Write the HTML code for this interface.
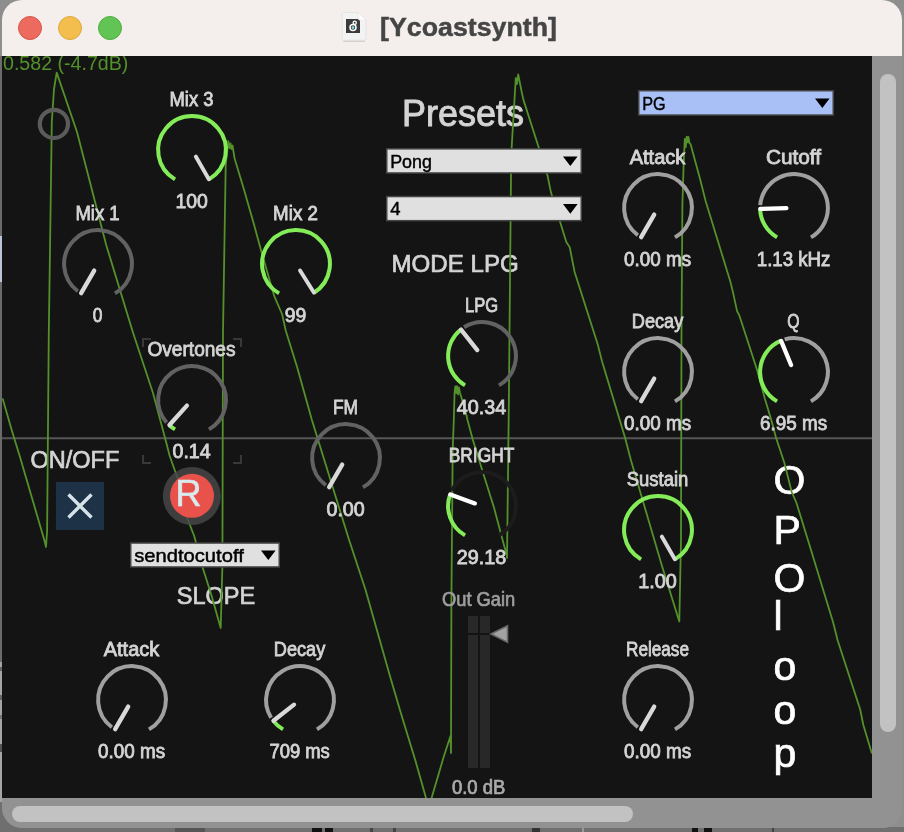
<!DOCTYPE html>
<html><head><meta charset="utf-8"><title>[Ycoastsynth]</title>
<style>
html,body{margin:0;padding:0;background:#8e8e8e;}
body{width:904px;height:832px;overflow:hidden;position:relative;font-family:"Liberation Sans",sans-serif;}
svg{will-change:transform;position:absolute;left:0;top:0;display:block}
text{font-family:"Liberation Sans",sans-serif;}
.kl{font-size:19.4px;text-anchor:middle;stroke:#d4d4d4;stroke-width:0.8px;}
.b{stroke:#d4d4d4;stroke-width:0.7px;}
.bb{stroke:#d4d4d4;stroke-width:0.9px;}
.mt{stroke:#000;stroke-width:0.45px;}
</style></head><body>
<svg width="904" height="832" viewBox="0 0 904 832">
<defs><clipPath id="win"><rect x="2" y="0" width="900" height="828" rx="20" ry="20"/></clipPath>
<clipPath id="content"><rect x="2" y="56" width="870" height="742"/></clipPath></defs>
<!-- desktop behind -->
<rect x="0" y="0" width="904" height="832" fill="#8e8e8e"/>
<rect x="0" y="56" width="4" height="180" fill="#6b6b6b"/>
<rect x="0" y="236" width="4" height="46" fill="#b9c5d8"/>
<rect x="0" y="282" width="4" height="380" fill="#6b6b6b"/>
<rect x="0" y="662" width="4" height="140" fill="#a4a4a4"/>
<rect x="0" y="667" width="4" height="4" fill="#666"/><rect x="0" y="695" width="4" height="5" fill="#666"/><rect x="0" y="715" width="4" height="4" fill="#777"/><rect x="0" y="744" width="4" height="8" fill="#555"/>
<rect x="0" y="802" width="20" height="30" fill="#6f6f6f"/><rect x="0" y="827" width="904" height="5" fill="#6f6f6f"/>
<rect x="175" y="826" width="30" height="6" fill="#555"/><rect x="312" y="826" width="10" height="6" fill="#111"/><rect x="325" y="826" width="8" height="6" fill="#111"/>
<rect x="370" y="826" width="3" height="6" fill="#444"/><rect x="393" y="826" width="3" height="6" fill="#444"/>
<rect x="532" y="826" width="8" height="6" fill="#333"/><rect x="582" y="826" width="2" height="6" fill="#999"/>
<rect x="692" y="826" width="6" height="6" fill="#111"/><rect x="704" y="826" width="8" height="6" fill="#111"/><rect x="772" y="826" width="2" height="6" fill="#444"/>
<rect x="886" y="0" width="18" height="60" fill="#8e8e8e"/>
<g clip-path="url(#win)">
<rect x="2" y="0" width="900" height="56" fill="#f4eeec"/>
<rect x="2" y="56" width="870" height="742" fill="#141414"/>
<rect x="872" y="56" width="30" height="772" fill="#929292"/>
<rect x="2" y="798" width="900" height="30" fill="#929292"/>
</g>
<!-- scrollbars -->
<rect x="880" y="74" width="16" height="658" rx="8" fill="#c2c2c2"/>
<rect x="12" y="806" width="621" height="16" rx="8" fill="#c2c2c2"/>
<!-- traffic lights -->
<circle cx="30" cy="28" r="11.5" fill="#ec6a5e" stroke="#d9544a" stroke-width="1"/>
<circle cx="70" cy="28" r="11.5" fill="#f4be4f" stroke="#dea73c" stroke-width="1"/>
<circle cx="110" cy="28" r="11.5" fill="#61c454" stroke="#4fae42" stroke-width="1"/>
<!-- title -->
<g>
<path d="M343.2 41.2h21.8" stroke="#cfc9c7" stroke-width="1.2"/>
<path d="M343.5 12.5h14.8l7.7 7.7v18.6a1.4 1.4 0 0 1-1.4 1.4h-21.1a1.4 1.4 0 0 1-1.4-1.4v-24.9a1.4 1.4 0 0 1 1.4-1.4z" fill="#f3f3f3" stroke="#dcdcdc" stroke-width="0.7"/>
<rect x="346" y="19" width="14" height="14" fill="#3b3b3b"/>
<path d="M358.3 12.5v6.3a1.4 1.4 0 0 0 1.4 1.4h6.3z" fill="#fdfdfd" stroke="#e2e2e2" stroke-width="0.5"/>
<circle cx="354.7" cy="22.8" r="1.6" fill="none" stroke="#fff" stroke-width="1.3"/>
<circle cx="353" cy="27.6" r="3.0" fill="#3b3b3b" stroke="#fff" stroke-width="1.5"/>
<circle cx="353" cy="27.6" r="1.35" fill="#86e4e6"/>
<text x="380" y="35.8" font-size="26.7" font-weight="bold" fill="#454545" stroke="#454545" stroke-width="0.5" textLength="177" lengthAdjust="spacing">[Ycoastsynth]</text>
</g>
<g clip-path="url(#content)">
<!-- scope: zero line, trace, readout -->
<line x1="2" y1="438.3" x2="872" y2="438.3" stroke="#565656" stroke-width="2"/>
<!-- big labels -->
<text x="402" y="126" font-size="36" fill="#d4d4d4" text-anchor="start" class="bb">Presets</text>
<text x="391.5" y="271.7" font-size="24.4" fill="#d4d4d4" text-anchor="start" textLength="127.2" lengthAdjust="spacingAndGlyphs" class="b">MODE LPG</text>
<text x="30.5" y="467.8" font-size="24.4" fill="#d4d4d4" text-anchor="start" textLength="88.8" lengthAdjust="spacingAndGlyphs" class="b">ON/OFF</text>
<text x="176.7" y="603.8" font-size="24.4" fill="#d4d4d4" text-anchor="start" textLength="78.6" lengthAdjust="spacingAndGlyphs" class="b">SLOPE</text>
<!-- OPOloop -->
<g font-size="41" fill="#fff" stroke="#fff" stroke-width="0.7">
<text x="773.4" y="493.7">O</text><text x="773.4" y="543.6">P</text><text x="773.4" y="591.6">O</text>
<text x="773.4" y="630">l</text><text x="773.4" y="680">o</text><text x="773.4" y="724">o</text><text x="773.4" y="767.3">p</text>
</g>
<path d="M2.6 398.4 L12 431 L20 457 L32 498 L44.3 540 L46 547 L47.1 531 L48.8 332 L50 250 L51.8 122 L54 89 L56.7 72.6 L77 132 L106.2 245 L132.8 332 L153 393 L164.5 436 L169.7 456 L177.9 479 L187 517.5 L194.2 536 L202.8 568 L211.6 595.7 L215.6 610 L220.7 628 L222.4 566 L223 332 L225.7 165.5 L228.3 141.2 L229.5 148 L230.5 143.5 L231.5 149 L232.5 145.5 L234.6 158.5 L243.3 187.3 L253.8 223.8 L261.7 252.8 L274.3 296.2 L282.2 314.5 L285.7 330.5 L297.1 367 L311.9 420 L349.1 540 L365.5 589.8 L389 672.8 L400 710.2 L415.6 761.3 L425.8 797.3 L428.7 807.7 L431.8 797.3 L443.8 756.5 L450.5 736 L451 753 L451.4 600 L452.7 450 L453.8 420 L454.6 392 L455.3 386.3 L456.2 393 L457 386.2 L458 394.5 L458.9 387.5 L460 393 L462 399.5 L465.8 412.3 L467.5 420 L472.9 440 L483.8 475.3 L493.9 507.3 L506.5 554.4 L507 558 L508.9 400 L509.5 332 L511.2 155.6 L514 108 L515.8 78 L517 84 L518.2 74.4 L521.8 92.5 L523.6 100.4 L539 148.2 L547.5 175.5 L551 192.6 L566.3 242 L569.7 247.2 L574.6 271.9 L597.6 343.9 L602 361.2 L625 437.6 L630.8 459.8 L662 566 L679.3 621.5 L681 540 L681.5 332 L682.4 205 L683.6 165 L684.8 138.8 L685.8 147 L686.7 136.6 L687.7 142.3 L688.4 137 L689.6 143.3 L690.6 144.2 L700 178.8 L705.6 201 L730.4 281.8 L733 292.4 L737 310.9 L739.6 316.2 L756.8 369 L764.8 398.4 L771.3 420 L776.1 438 L784.5 463.3 L791.7 492 L796.5 503 L811 550 L833.1 622.3 L837.6 640.3 L860.2 709.5 L863.2 724.5 L871.9 753.5" fill="none" stroke="#53912b" stroke-width="1.8" stroke-linejoin="round"/>
<text x="3" y="70.3" font-size="20" fill="#53912b" textLength="125.3" lengthAdjust="spacingAndGlyphs">0.582 (-4.7dB)</text>
<circle cx="53.9" cy="123.9" r="14.1" fill="none" stroke="#5b5b5b" stroke-width="4.2"/>
<!-- overtones brackets -->
<path d="M143 347v-8h8 M233 339h8v8 M143 455v8h8 M233 463h8v-8" fill="none" stroke="#383838" stroke-width="2"/>
<path d="M175.05 179.36A33.9 33.9 0 1 1 208.95 179.36" fill="none" stroke="#84ec58" stroke-width="4"/>
<line x1="195.80" y1="156.58" x2="208.85" y2="179.19" stroke="#d9d9d9" stroke-width="3.9" stroke-linecap="round"/>
<text x="191.5" y="106" class="kl" fill="#d4d4d4" textLength="44" lengthAdjust="spacingAndGlyphs">Mix 3</text>
<text x="191.6" y="208" class="kl" fill="#d4d4d4" textLength="32.4" lengthAdjust="spacingAndGlyphs">100</text>
<path d="M77.84 291.25A33.9 33.9 0 1 1 114.95 293.36" fill="none" stroke="#626262" stroke-width="4"/>
<line x1="94.20" y1="270.58" x2="81.15" y2="293.19" stroke="#d9d9d9" stroke-width="4.3" stroke-linecap="round"/>
<text x="97.5" y="220" class="kl" fill="#d4d4d4" textLength="44.2" lengthAdjust="spacingAndGlyphs">Mix 1</text>
<text x="97.6" y="322" class="kl" fill="#d4d4d4" textLength="9.7" lengthAdjust="spacingAndGlyphs">0</text>

<path d="M279.05 293.36A33.9 33.9 0 1 1 313.96 292.75" fill="none" stroke="#84ec58" stroke-width="4"/>
<line x1="300.03" y1="270.45" x2="313.86" y2="292.58" stroke="#d9d9d9" stroke-width="3.9" stroke-linecap="round"/>
<text x="295.5" y="220" class="kl" fill="#d4d4d4" textLength="44.8" lengthAdjust="spacingAndGlyphs">Mix 2</text>
<text x="295.6" y="322" class="kl" fill="#d4d4d4" textLength="21.6" lengthAdjust="spacingAndGlyphs">99</text>
<path d="M166.61 422.46A33.9 33.9 0 1 1 208.95 429.36" fill="none" stroke="#626262" stroke-width="4"/>
<path d="M175.05 429.36A33.9 33.9 0 0 1 169.32 425.19" fill="none" stroke="#84ec58" stroke-width="4"/>
<line x1="186.91" y1="405.65" x2="169.45" y2="425.04" stroke="#d9d9d9" stroke-width="4.3" stroke-linecap="round"/>
<text x="191.5" y="356" class="kl" fill="#d4d4d4" textLength="88" lengthAdjust="spacingAndGlyphs">Overtones</text>
<text x="191.6" y="458" class="kl" fill="#d4d4d4" textLength="38.2" lengthAdjust="spacingAndGlyphs">0.14</text>
<path d="M325.84 485.25A33.9 33.9 0 1 1 362.95 487.36" fill="none" stroke="#626262" stroke-width="4"/>
<line x1="342.20" y1="464.58" x2="329.15" y2="487.19" stroke="#d9d9d9" stroke-width="4.3" stroke-linecap="round"/>
<text x="345.5" y="414" class="kl" fill="#d4d4d4" textLength="25.1" lengthAdjust="spacingAndGlyphs">FM</text>
<text x="345.6" y="516" class="kl" fill="#d4d4d4" textLength="38.3" lengthAdjust="spacingAndGlyphs">0.00</text>
<path d="M464.04 327.25A33.9 33.9 0 1 1 498.95 385.36" fill="none" stroke="#626262" stroke-width="4"/>
<path d="M465.05 385.36A33.9 33.9 0 0 1 460.90 329.47" fill="none" stroke="#84ec58" stroke-width="4"/>
<line x1="477.27" y1="350.05" x2="461.02" y2="329.63" stroke="#d9d9d9" stroke-width="4.3" stroke-linecap="round"/>
<text x="481.5" y="312" class="kl" fill="#d4d4d4" textLength="33.1" lengthAdjust="spacingAndGlyphs">LPG</text>
<text x="481.6" y="414" class="kl" fill="#d4d4d4" textLength="49.5" lengthAdjust="spacingAndGlyphs">40.34</text>
<path d="M451.66 490.87A33.9 33.9 0 1 1 498.95 535.36" fill="none" stroke="#1c1c1c" stroke-width="4"/>
<path d="M465.05 535.36A33.9 33.9 0 0 1 450.14 494.41" fill="none" stroke="#84ec58" stroke-width="4"/>
<line x1="474.86" y1="503.40" x2="450.33" y2="494.47" stroke="#ffffff" stroke-width="4.3" stroke-linecap="round"/>
<text x="481.5" y="462" class="kl" fill="#d4d4d4" textLength="65.5" lengthAdjust="spacingAndGlyphs">BRIGHT</text>
<text x="481.6" y="564" class="kl" fill="#d4d4d4" textLength="49.5" lengthAdjust="spacingAndGlyphs">29.18</text>
<path d="M637.84 235.25A33.9 33.9 0 1 1 674.95 237.36" fill="none" stroke="#a0a0a0" stroke-width="4"/>
<line x1="654.20" y1="214.58" x2="641.15" y2="237.19" stroke="#d9d9d9" stroke-width="4.3" stroke-linecap="round"/>
<text x="657.5" y="164" class="kl" fill="#d4d4d4" textLength="55.7" lengthAdjust="spacingAndGlyphs">Attack</text>
<text x="657.6" y="266" class="kl" fill="#d4d4d4" textLength="67" lengthAdjust="spacingAndGlyphs">0.00 ms</text>
<path d="M760.23 205.05A33.9 33.9 0 1 1 810.95 237.36" fill="none" stroke="#a0a0a0" stroke-width="4"/>
<path d="M777.05 237.36A33.9 33.9 0 0 1 760.11 208.89" fill="none" stroke="#84ec58" stroke-width="4"/>
<line x1="786.40" y1="208.20" x2="760.31" y2="208.88" stroke="#ffffff" stroke-width="4.3" stroke-linecap="round"/>
<text x="793.5" y="164" class="kl" fill="#d4d4d4" textLength="55.1" lengthAdjust="spacingAndGlyphs">Cutoff</text>
<text x="793.6" y="266" class="kl" fill="#d4d4d4" textLength="73.7" lengthAdjust="spacingAndGlyphs">1.13 kHz</text>
<path d="M637.84 399.25A33.9 33.9 0 1 1 674.95 401.36" fill="none" stroke="#a0a0a0" stroke-width="4"/>
<line x1="654.20" y1="378.58" x2="641.15" y2="401.19" stroke="#d9d9d9" stroke-width="4.3" stroke-linecap="round"/>
<text x="657.5" y="328" class="kl" fill="#d4d4d4" textLength="51.4" lengthAdjust="spacingAndGlyphs">Decay</text>
<text x="657.6" y="430" class="kl" fill="#d4d4d4" textLength="67" lengthAdjust="spacingAndGlyphs">0.00 ms</text>
<path d="M784.66 339.41A33.9 33.9 0 0 1 810.95 401.36" fill="none" stroke="#a0a0a0" stroke-width="4"/>
<path d="M777.05 401.36A33.9 33.9 0 0 1 781.03 340.68" fill="none" stroke="#84ec58" stroke-width="4"/>
<line x1="791.09" y1="364.98" x2="781.10" y2="340.87" stroke="#ffffff" stroke-width="4.3" stroke-linecap="round"/>
<text x="793.5" y="328" class="kl" fill="#d4d4d4" textLength="12.3" lengthAdjust="spacingAndGlyphs">Q</text>
<text x="793.6" y="430" class="kl" fill="#d4d4d4" textLength="67" lengthAdjust="spacingAndGlyphs">6.95 ms</text>
<path d="M641.05 559.36A33.9 33.9 0 1 1 674.95 559.36" fill="none" stroke="#84ec58" stroke-width="4"/>
<line x1="661.80" y1="536.58" x2="674.85" y2="559.19" stroke="#d9d9d9" stroke-width="3.9" stroke-linecap="round"/>
<text x="657.5" y="486" class="kl" fill="#d4d4d4" textLength="61.5" lengthAdjust="spacingAndGlyphs">Sustain</text>
<text x="657.6" y="588" class="kl" fill="#d4d4d4" textLength="38.5" lengthAdjust="spacingAndGlyphs">1.00</text>
<path d="M637.84 727.25A33.9 33.9 0 1 1 674.95 729.36" fill="none" stroke="#a0a0a0" stroke-width="4"/>
<line x1="654.20" y1="706.58" x2="641.15" y2="729.19" stroke="#d9d9d9" stroke-width="4.3" stroke-linecap="round"/>
<text x="657.5" y="656" class="kl" fill="#d4d4d4" textLength="63" lengthAdjust="spacingAndGlyphs">Release</text>
<text x="657.6" y="758" class="kl" fill="#d4d4d4" textLength="67" lengthAdjust="spacingAndGlyphs">0.00 ms</text>
<path d="M111.84 727.25A33.9 33.9 0 1 1 148.95 729.36" fill="none" stroke="#a0a0a0" stroke-width="4"/>
<line x1="128.20" y1="706.58" x2="115.15" y2="729.19" stroke="#d9d9d9" stroke-width="4.3" stroke-linecap="round"/>
<text x="131.5" y="656" class="kl" fill="#d4d4d4" textLength="55.5" lengthAdjust="spacingAndGlyphs">Attack</text>
<text x="131.6" y="758" class="kl" fill="#d4d4d4" textLength="67" lengthAdjust="spacingAndGlyphs">0.00 ms</text>
<path d="M271.10 717.71A33.9 33.9 0 1 1 316.95 729.36" fill="none" stroke="#a0a0a0" stroke-width="4"/>
<path d="M283.05 729.36A33.9 33.9 0 0 1 273.29 720.87" fill="none" stroke="#84ec58" stroke-width="4"/>
<line x1="294.01" y1="704.68" x2="273.44" y2="720.75" stroke="#d9d9d9" stroke-width="4.3" stroke-linecap="round"/>
<text x="299.5" y="656" class="kl" fill="#d4d4d4" textLength="51.4" lengthAdjust="spacingAndGlyphs">Decay</text>
<text x="299.6" y="758" class="kl" fill="#d4d4d4" textLength="60.4" lengthAdjust="spacingAndGlyphs">709 ms</text>
<!-- toggle -->
<rect x="56" y="482" width="48" height="48" fill="#1d3147"/>
<path d="M68.5 494.5L91.5 517.5M91.5 494.5L68.5 517.5" stroke="#d6e4e8" stroke-width="3.4" fill="none"/>
<!-- R button -->
<circle cx="191.8" cy="496" r="29" fill="#484848" fill-opacity="0.82"/>
<circle cx="192" cy="495.8" r="22" fill="#e9524a"/>
<text x="188.5" y="506.2" font-size="36" fill="#d9eaee" stroke="#d9eaee" stroke-width="0.6" text-anchor="middle">R</text>
<!-- menus -->
<rect x="386" y="148.1" width="196" height="25.6" fill="#454545"/><rect x="387.5" y="149.6" width="193" height="22.6" fill="#e0e0e0"/><text x="390.2" y="167.5" font-size="18.5" fill="#000" class="mt" textLength="41.8" lengthAdjust="spacingAndGlyphs">Pong</text><path d="M563.0 156.4h14.6l-7.3 9.6z" fill="#000"/>
<rect x="386" y="195.8" width="196" height="25.6" fill="#454545"/><rect x="387.5" y="197.3" width="193" height="22.6" fill="#e0e0e0"/><text x="390.2" y="215.20000000000002" font-size="18.5" fill="#000" class="mt">4</text><path d="M563.0 204.10000000000002h14.6l-7.3 9.6z" fill="#000"/>
<rect x="638" y="90" width="196" height="25.8" fill="#454545"/><rect x="639.5" y="91.5" width="193" height="22.8" fill="#a8c0f5"/><text x="642.2" y="109.6" font-size="18.5" fill="#000" class="mt" textLength="23.5" lengthAdjust="spacingAndGlyphs">PG</text><path d="M815.0 98.4h14.6l-7.3 9.6z" fill="#000"/>
<rect x="130" y="542.3" width="150" height="25.4" fill="#454545"/><rect x="131.5" y="543.8" width="147" height="22.4" fill="#e0e0e0"/><text x="134.2" y="561.4999999999999" font-size="18.5" fill="#000" class="mt" textLength="109.6" lengthAdjust="spacingAndGlyphs">sendtocutoff</text><path d="M261.0 550.5h14.6l-7.3 9.6z" fill="#000"/>
<!-- out gain -->
<text x="478.6" y="606" font-size="19.4" fill="#9d9d9d" stroke="#9d9d9d" stroke-width="0.7" text-anchor="middle" textLength="73.2" lengthAdjust="spacingAndGlyphs">Out Gain</text>
<rect x="468" y="616" width="10" height="152" fill="#282828"/>
<rect x="480" y="616" width="10" height="152" fill="#282828"/>
<rect x="468" y="633" width="22" height="2" fill="#141414"/>
<path d="M491 634l16.5 -8.3v16.6z" fill="#a2a2a2" stroke="#6a6a6a" stroke-width="1.6" stroke-linejoin="miter"/>
<text x="478.7" y="794" font-size="19.4" fill="#ababab" stroke="#ababab" stroke-width="0.7" text-anchor="middle" textLength="53.5" lengthAdjust="spacingAndGlyphs">0.0 dB</text>
</g>
</svg>
</body></html>
